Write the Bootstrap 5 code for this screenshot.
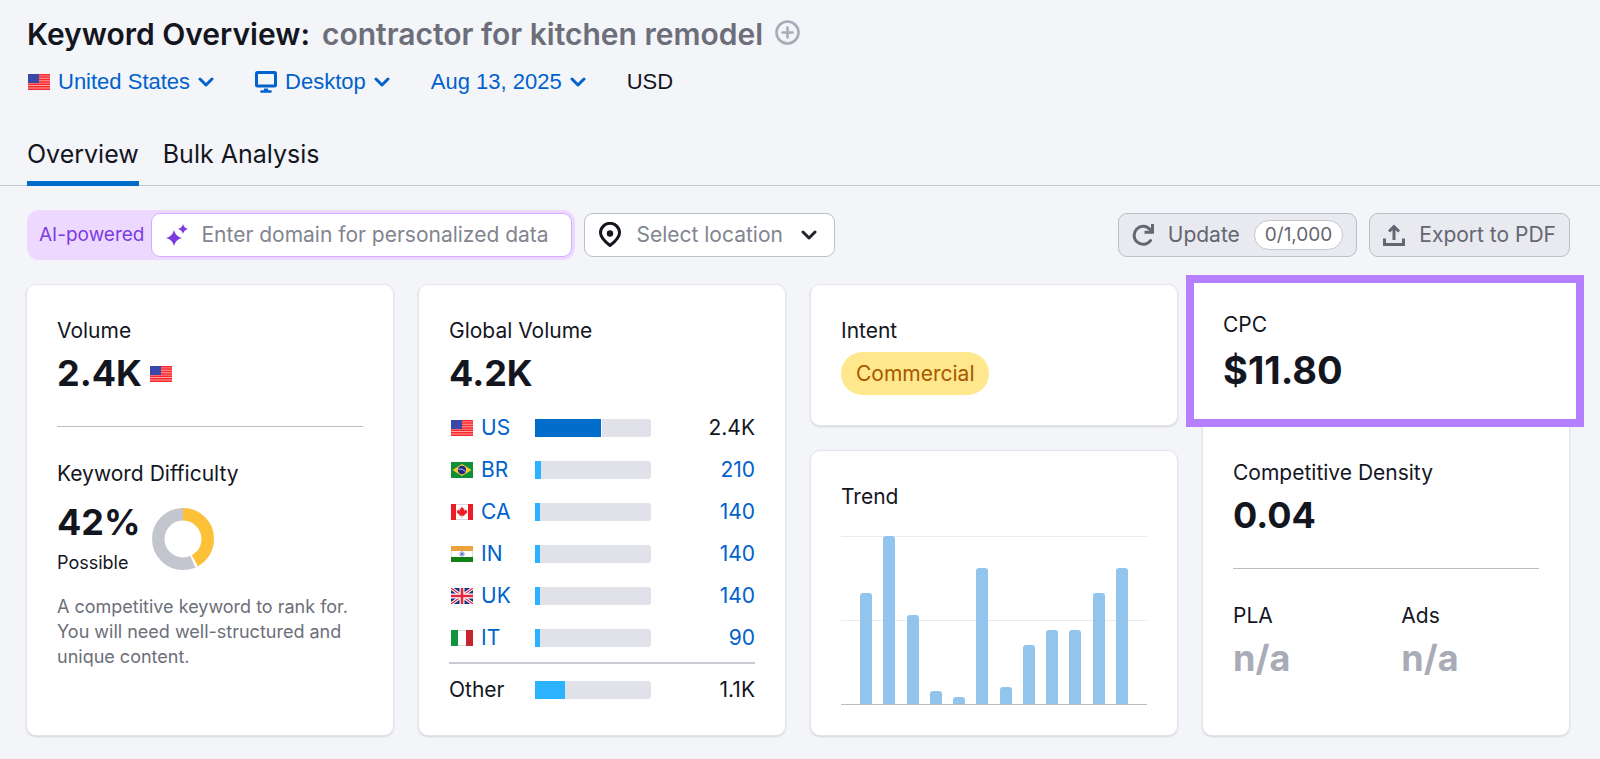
<!DOCTYPE html>
<html lang="en">
<head>
<meta charset="utf-8">
<meta name="viewport" content="width=device-width, initial-scale=1">
<title>Keyword Overview</title>
<link href="https://cdn.jsdelivr.net/npm/bootstrap@5.3.0/dist/css/bootstrap.min.css" rel="stylesheet">
<style>
  body { background: #f4f5f9; color: #14161f; font-family: Inter, "Liberation Sans", sans-serif; font-size: 21px; line-height: 30px; }
  .page-x { padding-left: 27px; padding-right: 30px; }
  .title-bar { padding-top: 12px; }
  .page-title { font-size: 30px; font-weight: 600; line-height: 44px; }
  .page-title span { color: #6c6e79; }
  .filters { margin-top: 10px; gap: 41px; font-size: 22px; line-height: 32px; font-family: "Liberation Sans", Arial, sans-serif; }
  .filters .btn { --bs-btn-color: #0062cc; font: inherit; gap: 8px; }
  .tabs { margin-top: 40px; gap: 24px; border-bottom: 1px solid #c4c7cf; }
  .tabs .nav-link { color: #14161f; font-size: 25px; line-height: 32px; padding: 0 0 11px; border-bottom: 5px solid transparent; margin-bottom: -1px; }
  .tabs .nav-link.active { border-color: #006dca; }
  .toolbar { margin-top: 24px; margin-bottom: 24px; gap: 9px; }
  .ai-box { background: #edd9ff; border-radius: 12px; padding: 3px 3px 3px 12px; color: #7c3be0; font-size: 19px; gap: 7px; }
  .ai-field { background: #fff; border: 1px solid #d6abff; border-radius: 9px; height: 44px; width: 421px; padding: 0 14px; gap: 13px; font-size: 21px; }
  .ai-field input { border: 0; outline: 0; background: none; min-width: 0; width: 100%; padding: 0; }
  .ai-field input::placeholder { color: #82858f; opacity: 1; }
  .box-btn { --bs-btn-padding-x: 13px; --bs-btn-padding-y: 0; --bs-btn-font-size: 21px; --bs-btn-border-radius: 9px; --bs-btn-color: #646671; --bs-btn-bg: #e9eaf0; --bs-btn-border-color: #bcbec8; height: 44px; gap: 14px; }
  .box-btn.pick { --bs-btn-bg: #fff; --bs-btn-color: #82858f; }
  .quota { background: #fff; border: 1px solid #c4c7cf; border-radius: 15px; font-size: 19px; line-height: 28px; padding: 0 10px; }
  .tiles { margin-left: -13px; }
  .tile { border: 1px solid #e4e5eb; border-radius: 10px; box-shadow: 0 1px 2px #d3d4dc; color: inherit; }
  .tile-pad { padding: 31px 30px 20px; }
  .tile-pad.intent { padding-bottom: 30px; }
  .metric { font-size: 36px; font-weight: 700; line-height: 55px; }
  .metric.short { line-height: 44px; }
  .rule { height: 1px; background: #b9bcc5; margin: 25px 0 32px; }
  .difficulty { margin-top: 11px; gap: 11px; }
  .note { font-size: 18px; line-height: 30px; }
  .about { font-size: 18px; line-height: 25px; color: #6c6e79; margin-top: 16px; }
  .volumes { width: 100%; margin-top: 6px; }
  .volumes th { width: 86px; font-weight: 400; }
  .volumes td, .volumes th { height: 42px; padding: 0; vertical-align: middle; }
  .volumes a { color: #0062cc; text-decoration: none; }
  .volumes tfoot td, .volumes tfoot th { height: 52px; border-top: 2px solid #c9cad4; }
  .volumes .gap-row td { height: 4px; }
  .meter { width: 116px; height: 18px; background: #e0e1e9; border-radius: 0 3px 3px 0; }
  .meter div { height: 100%; background: #2bb3ff; }
  .meter .main-bar { background: #006dca; border-right: 1px solid #fff; }
  .tag { background: #fee78c; color: #a75800; border-radius: 22px; line-height: 43px; padding: 0 15px; margin-top: 6px; }
  .chart { margin-top: 24px; height: 169px; padding: 0 19px; border-bottom: 1px solid #b9bcc5; background: linear-gradient(#e9eaf1, #e9eaf1) 0 0 / 100% 1px no-repeat, linear-gradient(#e9eaf1, #e9eaf1) 0 50% / 100% 1px no-repeat; }
  .chart div { width: 12px; background: #92c5ee; border-radius: 3px 3px 0 0; }
  .spotlight { border: 8px solid #b580ff; background: #fff; margin: -10px -15px 0 -17px; height: 152px; padding: 27px 29px 0; }
  .spotlight .metric { font-size: 38px; line-height: 60px; }
  .pla { width: 55%; }
  .muted { color: #a9abb6; }
</style>
</head>
<body>
<svg class="d-none" aria-hidden="true">
  <symbol id="us" viewBox="0 0 22 16"><path fill="#fff" d="M0 0h22v16H0z"/><path stroke="#f01f2b" stroke-width="1.5" d="M0 .7h22M0 3.1h22M0 5.5h22M0 7.9h22M0 10.3h22M0 12.7h22M0 15.3h22"/><path fill="#f33" fill-opacity=".45" d="M0 0h22v16H0z"/><path fill="#3b48a8" d="M0 0h11v9H0z"/></symbol>
  <symbol id="br" viewBox="0 0 22 16"><path fill="#0f8f37" d="M0 0h22v16H0z"/><path fill="#fcc931" d="M11 2l9.500 6-9.500 6-9.500-6z"/><circle cx="11" cy="8" r="4.200" fill="#1c2b8c"/><path d="M7.200 7q4-.8 7.500 2.500" fill="none" stroke="#b9c4dd"/></symbol>
  <symbol id="ca" viewBox="0 0 22 16"><path fill="#fff" d="M0 0h22v16H0z"/><path stroke="#d9dade" d="M5 .5h12M5 15.500h12"/><path fill="#ee1c25" d="M0 0h5v16H0zM17 0h5v16h-5zM11 2.500l1.200 2.200 1.200-.6-.5 3 1.600-1.500.4.900 1.500-.2-.6 1.600.6.500-3.200 2.500.3 1-2.200-.3v2h-.6v-2l-2.200.3.3-1-3.200-2.500.6-.5-.6-1.600 1.500.2.400-.9 1.600 1.500-.5-3 1.200.6z"/></symbol>
  <symbol id="in" viewBox="0 0 22 16"><path fill="#fff" d="M0 0h22v16H0z"/><path stroke="#ddd" d="M.5 0v16M21.500 0v16"/><path fill="#eba43c" d="M0 0h22v5H0z"/><path fill="#138016" d="M0 11h22v5H0z"/><circle cx="11" cy="8" r="2.200" fill="#d5dbf5" stroke="#7283d2" stroke-width=".8"/><circle cx="11" cy="8" r="1" fill="#33479f"/></symbol>
  <symbol id="uk" viewBox="0 0 22 16"><path fill="#1b2f86" d="M0 0h22v16H0z"/><path stroke="#fff" stroke-width="3.200" d="M0 0l22 16M22 0L0 16"/><path stroke="#e2283d" stroke-width="1.200" d="M0 0l22 16M22 0L0 16"/><path stroke="#fff" stroke-width="5" d="M11 0v16M0 8h22"/><path stroke="#e2283d" stroke-width="2.600" d="M11 0v16M0 8h22"/></symbol>
  <symbol id="it" viewBox="0 0 22 16"><path fill="#fff" d="M0 0h22v16H0z"/><path stroke="#ddd" d="M7 .5h8M7 15.500h8"/><path fill="#12913f" d="M0 0h7v16H0z"/><path fill="#c8232f" d="M15 0h7v16h-7z"/></symbol>
  <symbol id="chev" viewBox="0 0 16 10"><path d="M2 2l6 6 6-6" fill="none" stroke="currentColor" stroke-width="3" stroke-linecap="round" stroke-linejoin="round"/></symbol>
</svg>

<header>
  <div class="page-x title-bar">
    <h1 class="page-title mb-0 d-flex align-items-center">Keyword Overview:<span class="ms-2 ps-1">contractor for kitchen remodel</span>
      <button class="btn p-0 border-0 ms-2 ps-1 pb-1 d-flex" type="button" aria-label="Add keyword"><svg width="25" height="25" viewBox="0 0 25 25" fill="none" stroke="#a9abb6" stroke-width="2.600" stroke-linecap="round"><circle cx="12.500" cy="12.500" r="11"/><path d="M12.500 7.500v10M7.500 12.500h10"/></svg></button>
    </h1>
    <div class="filters d-flex align-items-center">
      <button class="btn p-0 border-0 d-flex align-items-center" type="button"><svg width="23" height="16"><use href="#us" x="1" width="22" height="16"/></svg>United States<svg width="16" height="10"><use href="#chev"/></svg></button>
      <button class="btn p-0 border-0 d-flex align-items-center" type="button"><svg width="22" height="22" viewBox="0 0 22 22" fill="none" stroke="currentColor" stroke-width="3"><rect x="1.500" y="1.500" width="19" height="13.500" rx="1"/><path d="M11 17.500v2.500" stroke-width="4"/><path d="M6.500 20.500h9" stroke-linecap="round" stroke-width="2.600"/></svg>Desktop<svg width="16" height="10"><use href="#chev"/></svg></button>
      <button class="btn p-0 border-0 d-flex align-items-center" type="button">Aug 13, 2025<svg width="16" height="10"><use href="#chev"/></svg></button>
      <span>USD</span>
    </div>
  </div>
  <nav class="tabs nav page-x">
    <a class="nav-link active" aria-current="page" href="#">Overview</a>
    <a class="nav-link" href="#">Bulk Analysis</a>
  </nav>
</header>

<main class="page-x pb-4">
  <div class="toolbar d-flex align-items-center">
    <div class="ai-box d-flex align-items-center">
      <label for="domain">AI-powered</label>
      <div class="ai-field d-flex align-items-center">
        <svg class="flex-shrink-0" width="22" height="22" viewBox="0 0 22 22" fill="#7c3be0"><path d="M8 6q1.500 6.500 8 8-6.500 1.500-8 8-1.500-6.500-8-8 6.500-1.500 8-8zM17 0q.9 4.100 5 5-4.100.9-5 5-.9-4.100-5-5 4.100-.9 5-5z"/></svg>
        <input id="domain" type="text" placeholder="Enter domain for personalized data">
      </div>
    </div>
    <button class="btn box-btn pick d-flex align-items-center" type="button"><svg width="24" height="26" viewBox="0 0 24 26" fill="none" stroke="#14161f" stroke-width="3" stroke-linejoin="round"><path d="M12 23.500C6 19 2.500 15.500 2.500 10.800a9.500 9.500 0 0 1 19 0C21.500 15.500 18 19 12 23.500z"/><circle cx="12" cy="11.500" r="3.200" fill="#14161f" stroke="none"/></svg>Select location<svg class="text-dark ms-1 me-1" width="16" height="10"><use href="#chev"/></svg></button>
    <div class="ms-auto d-flex gap-2">
      <button class="btn box-btn d-flex align-items-center me-1" type="button"><svg width="22" height="22" viewBox="0 0 22 22" fill="none" stroke="currentColor" stroke-width="3"><path d="M18.500 16.500A9 9 0 1 1 18 5.500" stroke-linecap="round"/><path d="M20.500 0v8.200h-8"/></svg>Update<span class="quota">0/1,000</span></button>
      <button class="btn box-btn d-flex align-items-center" type="button"><svg width="22" height="22" viewBox="0 0 22 22" fill="none" stroke="currentColor" stroke-width="3"><path d="M1.500 14.500v6h19v-6M11 16V3.500M6 7.500l5-5 5 5"/></svg>Export to PDF</button>
    </div>
  </div>

  <div class="row g-4 tiles">
    <div class="col-3">
      <section class="card tile tile-pad h-100">
        <div>Volume</div>
        <div class="metric d-flex align-items-center">2.4K<svg class="ms-2" width="22" height="16"><use href="#us" width="22" height="16"/></svg></div>
        <div class="rule"></div>
        <div>Keyword Difficulty</div>
        <div class="difficulty d-flex align-items-center">
          <div>
            <div class="metric short">42%</div>
            <div class="note mt-1">Possible</div>
          </div>
          <svg width="62" height="62" viewBox="0 0 62 62" fill="none" stroke-width="12.500"><circle cx="31" cy="31" r="24.750" stroke="#c3c5cf"/><circle cx="31" cy="31" r="24.750" stroke="#fff" pathLength="100" stroke-dasharray="43.500 100" transform="rotate(-90 31 31)"/><circle cx="31" cy="31" r="24.750" stroke="#fdc138" pathLength="100" stroke-dasharray="42 100" transform="rotate(-90 31 31)"/></svg>
        </div>
        <p class="about mb-0">A competitive keyword to rank for. You will need well-structured and unique content.</p>
      </section>
    </div>

    <div class="col-3">
      <section class="card tile tile-pad h-100">
        <div>Global Volume</div>
        <div class="metric">4.2K</div>
        <table class="volumes">
          <tbody>
            <tr><th scope="row"><a class="d-flex align-items-center gap-2" href="#"><svg width="24" height="16"><use href="#us" x="2" width="22" height="16"/></svg>US</a></th><td><div class="meter"><div class="main-bar" style="width:58%"></div></div></td><td class="text-end">2.4K</td></tr>
            <tr><th scope="row"><a class="d-flex align-items-center gap-2" href="#"><svg width="24" height="16"><use href="#br" x="2" width="22" height="16"/></svg>BR</a></th><td><div class="meter"><div style="width:5%"></div></div></td><td class="text-end"><a href="#">210</a></td></tr>
            <tr><th scope="row"><a class="d-flex align-items-center gap-2" href="#"><svg width="24" height="16"><use href="#ca" x="2" width="22" height="16"/></svg>CA</a></th><td><div class="meter"><div style="width:4%"></div></div></td><td class="text-end"><a href="#">140</a></td></tr>
            <tr><th scope="row"><a class="d-flex align-items-center gap-2" href="#"><svg width="24" height="16"><use href="#in" x="2" width="22" height="16"/></svg>IN</a></th><td><div class="meter"><div style="width:4%"></div></div></td><td class="text-end"><a href="#">140</a></td></tr>
            <tr><th scope="row"><a class="d-flex align-items-center gap-2" href="#"><svg width="24" height="16"><use href="#uk" x="2" width="22" height="16"/></svg>UK</a></th><td><div class="meter"><div style="width:4%"></div></div></td><td class="text-end"><a href="#">140</a></td></tr>
            <tr><th scope="row"><a class="d-flex align-items-center gap-2" href="#"><svg width="24" height="16"><use href="#it" x="2" width="22" height="16"/></svg>IT</a></th><td><div class="meter"><div style="width:4%"></div></div></td><td class="text-end"><a href="#">90</a></td></tr>
            <tr class="gap-row"><td colspan="3"></td></tr>
          </tbody>
          <tfoot>
            <tr><th scope="row">Other</th><td><div class="meter"><div style="width:26%"></div></div></td><td class="text-end">1.1K</td></tr>
          </tfoot>
        </table>
      </section>
    </div>

    <div class="col-3 d-flex flex-column gap-4">
      <section class="card tile tile-pad intent align-items-start">
        <div>Intent</div>
        <div class="tag">Commercial</div>
      </section>
      <section class="card tile tile-pad flex-fill">
        <div>Trend</div>
        <div class="chart d-flex align-items-end justify-content-between" role="img" aria-label="Search volume over twelve months">
          <div style="height:66%"></div><div style="height:100%"></div><div style="height:53%"></div><div style="height:8%"></div><div style="height:4%"></div><div style="height:81%"></div><div style="height:10%"></div><div style="height:35%"></div><div style="height:44%"></div><div style="height:44%"></div><div style="height:66%"></div><div style="height:81%"></div>
        </div>
      </section>
    </div>

    <div class="col-3">
      <section class="card tile h-100">
        <div class="spotlight">
          <div>CPC</div>
          <div class="metric">$11.80</div>
        </div>
        <div class="tile-pad">
          <div>Competitive Density</div>
          <div class="metric">0.04</div>
          <div class="rule"></div>
          <div class="d-flex">
            <div class="pla">PLA<div class="metric muted">n/a</div></div>
            <div>Ads<div class="metric muted">n/a</div></div>
          </div>
        </div>
      </section>
    </div>
  </div>
</main>
<script src="https://cdn.jsdelivr.net/npm/bootstrap@5.3.0/dist/js/bootstrap.bundle.min.js"></script>
</body>
</html>
